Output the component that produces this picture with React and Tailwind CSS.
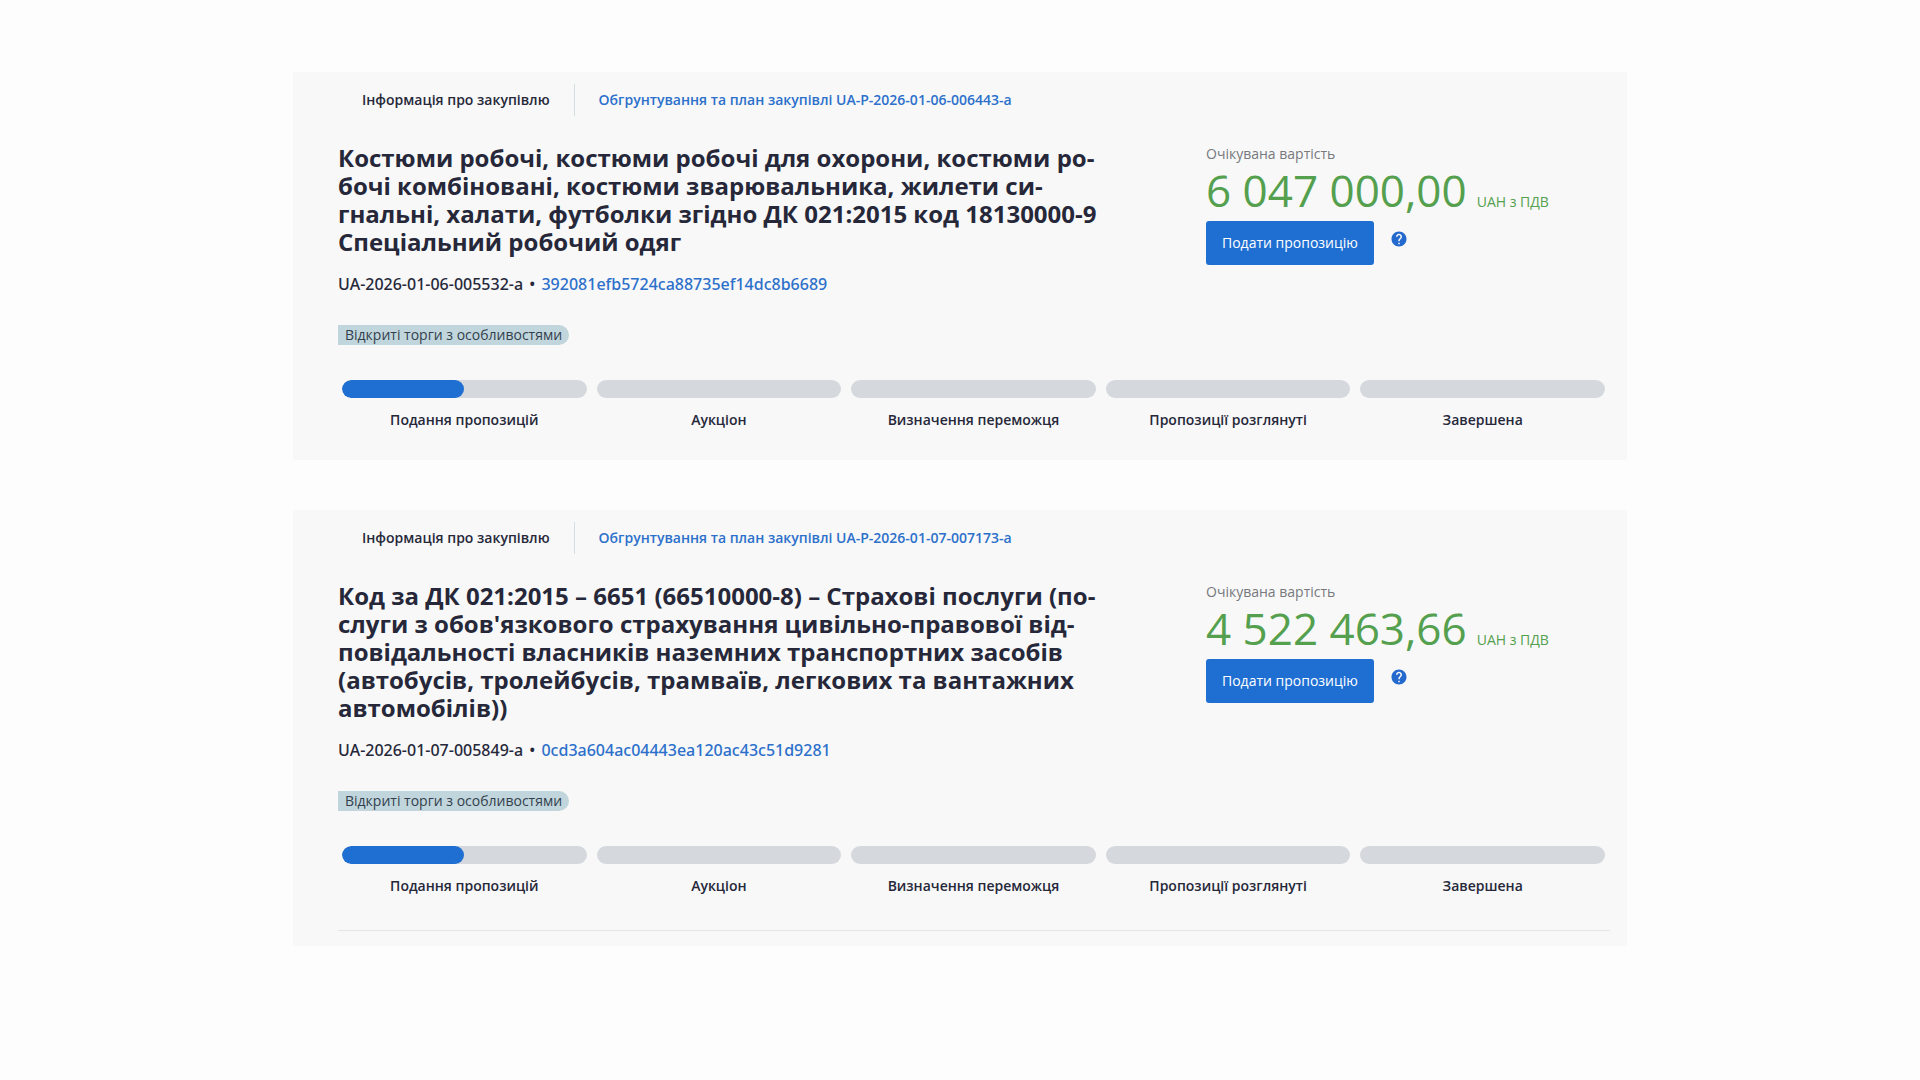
import React from 'react';
import { MdHelp } from 'react-icons/md';

const stages = [
  'Подання пропозицій',
  'Аукціон',
  'Визначення переможця',
  'Пропозиції розглянуті',
  'Завершена',
];

// \u00AD - м'які переноси у довгих назвах
const tenders = [
  {
    id: 'UA-2026-01-06-005532-a',
    hash: '392081efb5724ca88735ef14dc8b6689',
    plan: 'UA-P-2026-01-06-006443-a',
    title:
      'Костюми робочі, костюми робочі для охорони, костюми ро\u00ADбочі комбіновані, костюми зварювальника, жилети си\u00ADгнальні, халати, футболки згідно ДК 021:2015 код 18130000-9 Спеціальний робочий одяг',
    amount: '6 047 000,00',
    progress: 50,
  },
  {
    id: 'UA-2026-01-07-005849-a',
    hash: '0cd3a604ac04443ea120ac43c51d9281',
    plan: 'UA-P-2026-01-07-007173-a',
    title:
      "Код за ДК 021:2015 – 6651 (66510000-8) – Страхові послуги (по\u00ADслуги з обов'язкового страхування цивільно-правової від\u00ADповідальності власників наземних транспортних засобів (автобусів, тролейбусів, трамваїв, легкових та вантажних автомобілів))",
    amount: '4 522 463,66',
    progress: 50,
    divider: true,
  },
];

function Tabs({ plan }) {
  return (
    <nav className="flex items-center text-sm font-semibold pl-6">
      <span className="pr-6">Інформація про закупівлю</span>
      <a href="#plan" className="flex items-center h-8 border-l border-[#d3dfe2] pl-6 text-[#2c70cb]">
        Обгрунтування та план закупівлі {plan}
      </a>
    </nav>
  );
}

function Price({ amount }) {
  return (
    <div className="w-[404px] shrink-0">
      <p className="text-sm text-[#77797d]">Очікувана вартість</p>
      <p className="flex items-baseline gap-[10px] text-[#54a04e]">
        <span className="text-[44px] leading-[52px]">{amount}</span>
        <span className="text-sm">UAH з ПДВ</span>
      </p>
      <div className="flex items-start gap-4 pt-[5px]">
        <button type="button" className="h-11 px-4 rounded-[3px] bg-[#1f6fd2] text-white text-sm cursor-pointer">
          Подати пропозицію
        </button>
        <button type="button" aria-label="Довідка" className="pt-[9px] text-[#2469cd] cursor-pointer">
          <MdHelp size={18} />
        </button>
      </div>
    </div>
  );
}

function Stages({ progress }) {
  return (
    <ol className="grid grid-cols-5 gap-[10px] pl-1 pr-[5px]">
      {stages.map((stage, i) => (
        <li key={stage} className="text-center text-sm font-semibold">
          <div className="h-[18px] mb-3 rounded-full bg-[#d5d9de] overflow-hidden">
            {i === 0 && (
              <div className="h-full rounded-full bg-[#1f6fd2]" style={{ width: `${progress}%` }} />
            )}
          </div>
          {stage}
        </li>
      ))}
    </ol>
  );
}

function TenderCard({ tender }) {
  return (
    <article className="bg-[#f8f8f8] pt-3 pl-[45px] pr-[17px]">
      <Tabs plan={tender.plan} />

      <div className="flex justify-between pt-7">
        <div className="w-[764px]">
          <h2 className="text-2xl leading-[28px] font-bold hyphens-manual">{tender.title}</h2>
          <p className="pt-4 text-base font-['Noto_Sans',sans-serif] font-medium">
            {tender.id} <span className="px-0.5">•</span>{' '}
            <a href="#tender" className="text-[#2c70cb]">{tender.hash}</a>
          </p>
        </div>
        <Price amount={tender.amount} />
      </div>

      <div className="flex pt-[29px] pb-[35px]">
        <span className="h-5 px-[7px] rounded-l-[2px] rounded-r-full bg-[#c1d6dc] text-sm text-[#333f4e]">
          Відкриті торги з особливостями
        </span>
      </div>

      <Stages progress={tender.progress} />

      {tender.divider ? (
        <div className="pt-[34px] pb-[15px]">
          <hr className="border-[#e3e5e7]" />
        </div>
      ) : (
        <div className="h-[30px]" />
      )}
    </article>
  );
}

export default function App() {
  return (
    <div className="min-h-screen bg-[#fdfdfd] text-[#26283a] font-['Open_Sans',sans-serif]">
      <main className="max-w-[1334px] mx-auto pt-[72px] pb-12 space-y-[50px]">
        {tenders.map((tender) => (
          <TenderCard key={tender.id} tender={tender} />
        ))}
      </main>
    </div>
  );
}
